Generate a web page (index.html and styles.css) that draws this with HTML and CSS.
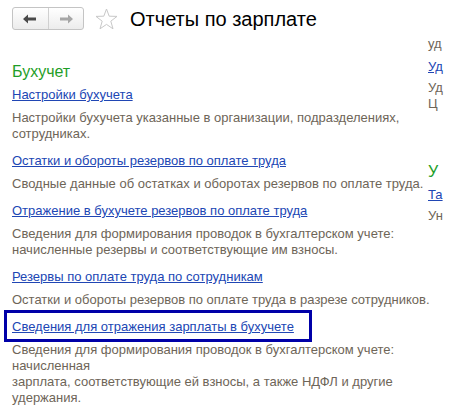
FILE: index.html
```html
<!DOCTYPE html>
<html>

<head>
    <link rel="stylesheet" href="styles.css">
</head>

<body>

    <div class="header">
        <div class="nav">
            <button class="nav-btn back">
                <svg width="14" height="10" viewBox="0 0 14 10"><path d="M0 5 L5 0.5 L5 3.5 L13 3.5 L13 6.5 L5 6.5 L5 9.5 Z" fill="#4a4a4a"/></svg>
            </button>
            <button class="nav-btn forward">
                <svg width="14" height="10" viewBox="0 0 14 10"><path d="M14 5 L9 0.5 L9 3.5 L1 3.5 L1 6.5 L9 6.5 L9 9.5 Z" fill="#a6a6a6"/></svg>
            </button>
        </div>
        <svg class="star" width="23" height="22" viewBox="0 0 23 22">
            <path d="M11.5 1 L14.2 8.2 L22 8.4 L15.8 13.2 L18 20.8 L11.5 16.4 L5 20.8 L7.2 13.2 L1 8.4 L8.8 8.2 Z" fill="none" stroke="#c8c8c8" stroke-width="1"/>
        </svg>
        <h1 class="title">Отчеты по зарплате</h1>
    </div>

    <div class="columns">
        <div class="column main">
            <h3 class="group">Бухучет</h3>

            <div class="item">
                <a href="#">Настройки бухучета</a>
                <p>Настройки бухучета указанные в организации, подразделениях,<br>сотрудниках.</p>
            </div>
            <div class="item">
                <a href="#">Остатки и обороты резервов по оплате труда</a>
                <p>Сводные данные об остатках и оборотах резервов по оплате труда.</p>
            </div>
            <div class="item">
                <a href="#">Отражение в бухучете резервов по оплате труда</a>
                <p>Сведения для формирования проводок в бухгалтерском учете:<br>начисленные резервы и соответствующие им взносы.</p>
            </div>
            <div class="item">
                <a href="#">Резервы по оплате труда по сотрудникам</a>
                <p>Остатки и обороты резервов по оплате труда в разрезе сотрудников.</p>
            </div>
            <div class="item selected">
                <a href="#">Сведения для отражения зарплаты в бухучете</a>
                <p>Сведения для формирования проводок в бухгалтерском учете:<br>начисленная<br>зарплата, соответствующие ей взносы, а также НДФЛ и другие<br>удержания.</p>
            </div>
        </div>

        <div class="column side">
            <p class="tail">уд</p>
            <div class="item">
                <a href="#">Уд</a>
                <p>Уд<br>Ц</p>
            </div>
            <h3 class="group">У</h3>
            <div class="item">
                <a href="#">Та</a>
                <p>Ун</p>
            </div>
        </div>
    </div>

</body>

</html>
```

FILE: styles.css
```css
body {
    margin: 0;
    font-family: Arial, "Liberation Sans", sans-serif;
    font-size: 13px;
    background-color: #fff;
    overflow: hidden;
}

.header {
    display: flex;
    align-items: center;
    height: 36px;
    padding-left: 12px;
}

.nav {
    display: flex;
    width: 72px;
    height: 23px;
    box-sizing: border-box;
    border: 1px solid #c4c4c4;
    border-radius: 3px;
    background: linear-gradient(#ffffff, #ececec);
    margin-top: 1px;
}

.nav-btn {
    flex: 1;
    border: none;
    background: none;
    padding: 0;
    display: flex;
    align-items: center;
    justify-content: center;
    cursor: pointer;
}

.nav-btn.back {
    border-right: 1px solid #d0d0d0;
}

.star {
    margin-left: 11px;
    margin-top: 1px;
}

.title {
    margin: 3px 0 0 12px;
    font-size: 20px;
    font-weight: normal;
    color: #000;
}

.columns {
    display: flex;
}

.column {
    flex-shrink: 0;
    white-space: nowrap;
}

.column.main {
    width: 404px;
    padding-left: 12px;
    padding-right: 12px;
}

.column.side {
    width: 39px;
}

.group {
    margin: 26px 0 5px 0;
    font-size: 16px;
    font-weight: normal;
    line-height: 20px;
    color: #1f9e28;
}

.item {
    margin-bottom: 11px;
}

.item a {
    display: inline-block;
    line-height: 16px;
    margin-bottom: 7px;
    color: #2046b4;
}

.item p, .tail {
    margin: 0;
    line-height: 16px;
    color: #6e6558;
}

.tail {
    margin-bottom: 7px;
}

.side .item a {
    margin-bottom: 5px;
}

.side .group {
    margin-top: 50px;
}

.item.selected {
    position: relative;
}

.item.selected::after {
    content: "";
    position: absolute;
    left: -8px;
    top: -9px;
    width: 302px;
    height: 26px;
    border: 3px solid #0000a8;
}
```
